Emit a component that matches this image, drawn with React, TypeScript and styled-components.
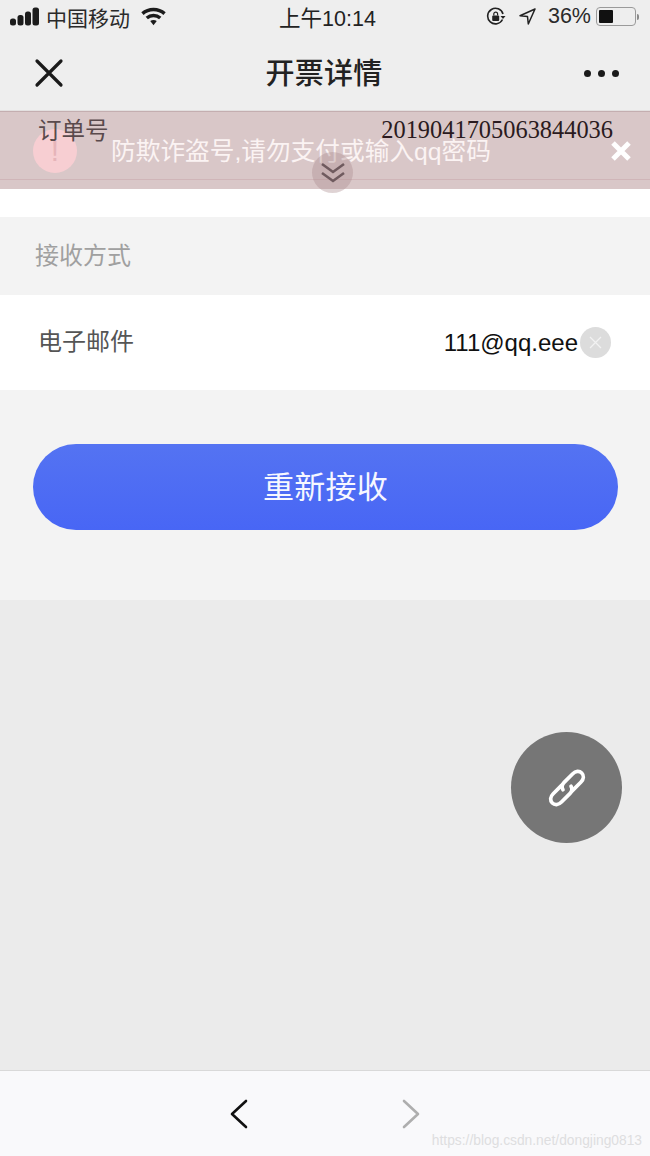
import * as React from 'react';
import styled, { createGlobalStyle } from 'styled-components';

const CJK = '"Liberation Sans", "Noto Sans CJK SC", sans-serif';

const GlobalStyle = createGlobalStyle`
  html, body {
    margin: 0;
    padding: 0;
    background: #ebebeb;
    font-family: ${CJK};
  }
`;

const Page = styled.div`
  position: relative;
  width: 650px;
  height: 1156px;
  display: flex;
  flex-direction: column;
  overflow: hidden;
  background: #ebebeb;
`;

const Header = styled.header`
  height: 110px;
  background: #eeeeee;
  border-bottom: 1px solid #e3e0e0;
  box-sizing: content-box;
  flex: none;
`;

const StatusBar = styled.div`
  height: 36px;
  display: grid;
  grid-template-columns: 1fr auto 1fr;
  align-items: center;
  padding: 0 10px;
  color: #1a1a1a;
`;

const StatusLeft = styled.div`
  display: flex;
  align-items: center;
  gap: 6px;
  font-size: 21px;
  color: #2a2a2a;
  padding-bottom: 3px;
`;

const StatusRight = styled.div`
  display: flex;
  align-items: center;
  justify-content: flex-end;
  font-size: 21.5px;
  color: #2a2a2a;
  padding-bottom: 3px;
`;

const Clock = styled.div`
  font-size: 21.5px;
  color: #222;
  padding: 0 0 4px 5px;
`;

const Battery = styled.div`
  width: 40px;
  height: 19px;
  margin-left: 5px;
  padding: 2px;
  box-sizing: border-box;
  border: 1px solid #9a9a9a;
  border-radius: 4px;
  margin-right: 1px;
  display: flex;
`;

const BatteryFill = styled.div`
  width: 14px;
  background: #111;
  border-radius: 1px;
`;

const BatteryCap = styled.div`
  width: 2px;
  height: 6px;
  margin-right: 1px;
  border-radius: 0 2px 2px 0;
  background: #8a8a8a;
`;

const NavBar = styled.div`
  height: 74px;
  display: flex;
  align-items: center;
  justify-content: space-between;
  padding: 0 31px 0 34px;
`;

const NavTitle = styled.h1`
  margin: 0;
  font-size: 29px;
  font-weight: 500;
  color: #222;
  letter-spacing: 0.3px;
  padding-bottom: 5px;
`;

const Dots = styled.div`
  display: flex;
  gap: 7px;
`;

const Dot = styled.span`
  width: 7px;
  height: 7px;
  border-radius: 50%;
  background: #1a1a1a;
`;

const OrderSection = styled.section`
  height: 106px;
  flex: none;
  background: #fff;
`;

const OrderRow = styled.div`
  position: relative;
  z-index: 2;
  height: 38px;
  display: flex;
  justify-content: space-between;
  align-items: center;
  padding: 0 37px 0 38px;
`;

const OrderLabel = styled.span`
  font-size: 23.5px;
  color: #5a4a4c;
  padding-bottom: 3px;
`;

const OrderNumber = styled.span`
  font-family: "Liberation Serif", serif;
  font-size: 24.4px;
  color: #2a1a20;
`;

const Banner = styled.div`
  position: absolute;
  top: 111px;
  left: 0;
  width: 650px;
  height: 78px;
  box-sizing: border-box;
  padding: 0 18px 0 33px;
  display: flex;
  align-items: center;
  background: rgba(170, 130, 132, 0.45);
  border-top: 1px solid #c4aeb0;
`;

const WarnCircle = styled.div`
  width: 44px;
  height: 44px;
  border-radius: 50%;
  background: #f7ced2;
  color: #e6b4b9;
  font-size: 30px;
  display: flex;
  align-items: center;
  justify-content: center;
  flex: none;
`;

const BannerText = styled.div`
  margin-left: 34px;
  flex: 1;
  font-size: 24.7px;
  color: #fbf3f3;
  padding-bottom: 3px;
`;

const BannerRule = styled.div`
  position: absolute;
  left: 0;
  right: 0;
  bottom: 9px;
  height: 1px;
  background: #d0b5b8;
`;

const Expand = styled.div`
  position: absolute;
  top: 152px;
  left: 312px;
  width: 41px;
  height: 41px;
  border-radius: 50%;
  background: rgba(170, 140, 142, 0.38);
  display: flex;
  align-items: center;
  justify-content: center;
`;

const SectionTitle = styled.div`
  height: 78px;
  flex: none;
  box-sizing: border-box;
  padding: 0 35px 6px;
  display: flex;
  align-items: center;
  background: #f3f3f3;
  font-size: 24px;
  color: #a0a0a0;
`;

const EmailRow = styled.div`
  height: 95px;
  flex: none;
  box-sizing: border-box;
  padding: 0 39px 0 38px;
  display: flex;
  align-items: center;
  justify-content: space-between;
  background: #fff;
`;

const RowLabel = styled.span`
  font-size: 24px;
  color: #555;
  padding-bottom: 6px;
`;

const EmailValue = styled.div`
  display: flex;
  align-items: center;
  gap: 2px;
  font-size: 24px;
  color: #111;
`;

const ClearButton = styled.div`
  width: 31px;
  height: 31px;
  border-radius: 50%;
  background: #dcdcdc;
  display: flex;
  align-items: center;
  justify-content: center;
`;

const ActionArea = styled.div`
  height: 210px;
  flex: none;
  box-sizing: border-box;
  padding: 54px 32px 0 33px;
  background: #f3f3f3;
`;

const SubmitButton = styled.button`
  width: 100%;
  height: 86px;
  border: 0;
  padding: 0 0 6px;
  border-radius: 43px;
  background: linear-gradient(180deg, #5473f2 0%, #4866f5 100%);
  color: #f6f7ff;
  font-family: ${CJK};
  font-size: 31px;
  letter-spacing: 0.2px;
`;

const Spacer = styled.div`
  flex: 1;
`;

const LinkFab = styled.div`
  position: absolute;
  top: 732px;
  left: 511px;
  width: 111px;
  height: 111px;
  border-radius: 50%;
  background: #767676;
  display: flex;
  align-items: center;
  justify-content: center;
`;

const BottomBar = styled.footer`
  height: 86px;
  flex: none;
  box-sizing: border-box;
  border-top: 1px solid #d9d9d9;
  background: #f9f9fb;
  display: flex;
  align-items: center;
  justify-content: center;
  gap: 154px;
`;

const Watermark = styled.div`
  position: absolute;
  right: 8px;
  bottom: 8px;
  font-size: 13.8px;
  color: #dedee0;
`;

const SignalBars = () => (
  <svg width="30" height="19" viewBox="0 0 30 19">
    <rect x="0" y="11.500" width="6" height="7" rx="2.500" fill="#1c1c1c" />
    <rect x="7.500" y="8" width="6" height="10.500" rx="2.500" fill="#1c1c1c" />
    <rect x="15" y="4.500" width="6" height="14" rx="2.500" fill="#1c1c1c" />
    <rect x="22.500" y="0.500" width="6.500" height="18" rx="2.500" fill="#1c1c1c" />
  </svg>
);

const WifiIcon = () => (
  <svg width="25" height="19" viewBox="0 0 26 19" style={{ marginLeft: 5 }}>
    <path d="M1.500 6.500C8 .7 18 .7 24.500 6.500" fill="none" stroke="#1c1c1c" strokeWidth="3.600" />
    <path d="M6 11c4-3.500 10-3.500 14 0" fill="none" stroke="#1c1c1c" strokeWidth="3.600" />
    <path d="M9.600 14.200c2-1.500 4.800-1.500 6.800 0L13 18.500z" fill="#1c1c1c" />
  </svg>
);

const RotationLock = () => (
  <svg width="20" height="20" viewBox="0 0 20 20" style={{ marginRight: 13 }}>
    <path d="M16.500 12.500A7.800 7.800 0 1 1 17 7" fill="none" stroke="#222" strokeWidth="1.600" />
    <path d="M14.500 9h5l-2.500 3z" fill="#222" />
    <rect x="6.200" y="8.500" width="7" height="5.500" rx="1" fill="#222" />
    <path d="M7.800 8.500V7a1.900 1.900 0 0 1 3.800 0v1.500" fill="none" stroke="#222" strokeWidth="1.200" />
  </svg>
);

const LocationArrow = () => (
  <svg width="17" height="17" viewBox="0 0 17 17" style={{ marginRight: 12 }}>
    <path d="M16 1L1 7.800l7.500.8.800 7.400z" fill="none" stroke="#222" strokeWidth="1.500" strokeLinejoin="round" />
  </svg>
);

const CloseIcon = () => (
  <svg width="30" height="30" viewBox="0 0 30 30">
    <path d="M3 3l24 24M27 3L3 27" stroke="#1a1a1a" strokeWidth="3.200" strokeLinecap="round" />
  </svg>
);

const BannerClose = () => (
  <svg width="22" height="22" viewBox="0 0 22 22">
    <path d="M3 3l16 16M19 3L3 19" stroke="#fff" strokeWidth="5" />
  </svg>
);

const DoubleChevron = () => (
  <svg width="26" height="24" viewBox="0 0 26 24">
    <path d="M2 3l11 8 11-8M2 12l11 8 11-8" fill="none" stroke="#6f5a5e" strokeWidth="2.600" />
  </svg>
);

const ClearIcon = () => (
  <svg width="13" height="13" viewBox="0 0 13 13">
    <path d="M1 1l11 11M12 1L1 12" stroke="#f2f2f2" strokeWidth="1.200" />
  </svg>
);

const ChainIcon = () => (
  <svg width="46" height="46" viewBox="0 0 40 40" fill="none" stroke="#fff" strokeWidth="3.200" strokeLinecap="round">
    <path d="M15.500 17.500L8 25c-2.800 2.800-2.800 6 -.8 8s5.300 2 8-.8l7.300-7.300c2-2 2.200-4.400 1-6.400" />
    <path d="M24.500 22.500L32 15c2.800-2.800 2.800-6 .8-8s-5.300-2-8 .8l-7.300 7.300c-2 2-2.200 4.400-1 6.400" />
  </svg>
);

const Chevron = ({ direction, color }: { direction: 'left' | 'right'; color: string }) => (
  <svg width="18" height="30" viewBox="0 0 18 30">
    <path
      d={direction === 'left' ? 'M16 2L2 15l14 13' : 'M2 2l14 13L2 28'}
      fill="none"
      stroke={color}
      strokeWidth="2.600"
      strokeLinecap="round"
      strokeLinejoin="round"
    />
  </svg>
);

const App: React.FC = () => (
  <Page>
    <GlobalStyle />
    <Header>
      <StatusBar>
        <StatusLeft>
          <SignalBars />
          <span>中国移动</span>
          <WifiIcon />
        </StatusLeft>
        <Clock>上午10:14</Clock>
        <StatusRight>
          <RotationLock />
          <LocationArrow />
          <span>36%</span>
          <Battery>
            <BatteryFill />
          </Battery>
          <BatteryCap />
        </StatusRight>
      </StatusBar>
      <NavBar>
        <CloseIcon />
        <NavTitle>开票详情</NavTitle>
        <Dots>
          <Dot />
          <Dot />
          <Dot />
        </Dots>
      </NavBar>
    </Header>

    <OrderSection>
      <OrderRow>
        <OrderLabel>订单号</OrderLabel>
        <OrderNumber>2019041705063844036</OrderNumber>
      </OrderRow>
    </OrderSection>

    <SectionTitle>接收方式</SectionTitle>

    <EmailRow>
      <RowLabel>电子邮件</RowLabel>
      <EmailValue>
        <span>111@qq.eee</span>
        <ClearButton>
          <ClearIcon />
        </ClearButton>
      </EmailValue>
    </EmailRow>

    <ActionArea>
      <SubmitButton>重新接收</SubmitButton>
    </ActionArea>

    <Spacer />

    <BottomBar>
      <Chevron direction="left" color="#111" />
      <Chevron direction="right" color="#aeaeae" />
    </BottomBar>

    <Banner>
      <WarnCircle>!</WarnCircle>
      <BannerText>防欺诈盗号,请勿支付或输入qq密码</BannerText>
      <BannerClose />
      <BannerRule />
    </Banner>
    <Expand>
      <DoubleChevron />
    </Expand>
    <LinkFab>
      <ChainIcon />
    </LinkFab>
    <Watermark>https://blog.csdn.net/dongjing0813</Watermark>
  </Page>
);

export default App;
